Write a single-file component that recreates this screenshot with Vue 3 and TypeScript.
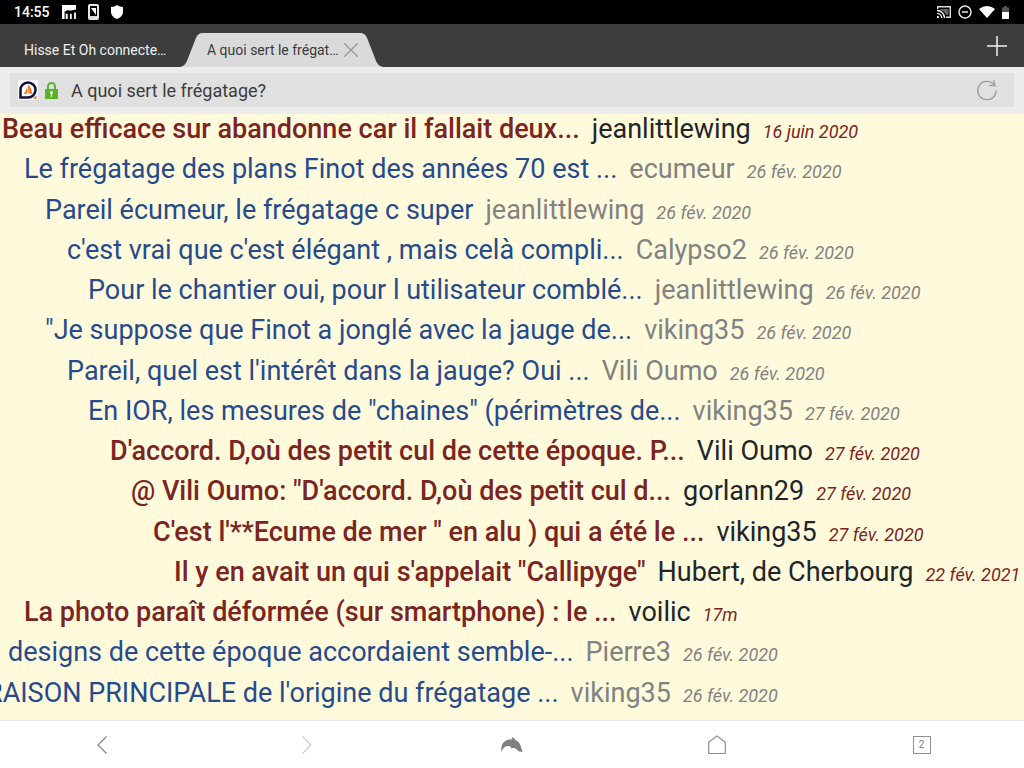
<script setup lang="ts">
import { ref } from 'vue'

interface Post {
  indent: number
  title: string
  author: string
  date: string
  unread?: boolean
}

const address = ref('A quoi sert le frégatage?')

const posts: Post[] = [
  { indent: 2, title: 'Beau efficace sur abandonne car il fallait deux...', author: 'jeanlittlewing', date: '16 juin 2020', unread: true },
  { indent: 24, title: 'Le frégatage des plans Finot des années 70 est ...', author: 'ecumeur', date: '26 fév. 2020' },
  { indent: 45, title: 'Pareil écumeur, le frégatage c super', author: 'jeanlittlewing', date: '26 fév. 2020' },
  { indent: 67, title: "c'est vrai que c'est élégant , mais celà compli...", author: 'Calypso2', date: '26 fév. 2020' },
  { indent: 88, title: 'Pour le chantier oui, pour l utilisateur comblé...', author: 'jeanlittlewing', date: '26 fév. 2020' },
  { indent: 45, title: '"Je suppose que Finot a jonglé avec la jauge de...', author: 'viking35', date: '26 fév. 2020' },
  { indent: 67, title: "Pareil, quel est l'intérêt dans la jauge? Oui ...", author: 'Vili Oumo', date: '26 fév. 2020' },
  { indent: 88, title: 'En IOR, les mesures de "chaines" (périmètres de...', author: 'viking35', date: '27 fév. 2020' },
  { indent: 110, title: "D'accord. D,où des petit cul de cette époque. P...", author: 'Vili Oumo', date: '27 fév. 2020', unread: true },
  { indent: 131, title: '@ Vili Oumo: "D\'accord. D,où des petit cul d...', author: 'gorlann29', date: '27 fév. 2020', unread: true },
  { indent: 153, title: "C'est l'**Ecume de mer \" en alu ) qui a été le ...", author: 'viking35', date: '27 fév. 2020', unread: true },
  { indent: 174, title: 'Il y en avait un qui s\'appelait "Callipyge"', author: 'Hubert, de Cherbourg', date: '22 fév. 2021', unread: true },
  { indent: 24, title: 'La photo paraît déformée (sur smartphone) : le ...', author: 'voilic', date: '17m', unread: true },
  { indent: 8, title: 'designs de cette époque accordaient semble-...', author: 'Pierre3', date: '26 fév. 2020' },
  { indent: -14, title: "RAISON PRINCIPALE de l'origine du frégatage ...", author: 'viking35', date: '26 fév. 2020' },
]
</script>

<template>
  <div class="browser">
    <header class="status">
      <time class="clock">14:55</time>
      <svg width="14" height="14" viewBox="0 0 14 14" aria-hidden="true">
        <path fill="#fff" d="M0 0h14v4.500L12 5.500H4V14H0z" />
        <path fill="none" stroke="#000" stroke-width="1.200" d="M3.200 14V6.200M3.200 7.500Q6.500 4.500 8.500 7.500 10.500 4.500 14 5.500" />
        <path fill="none" stroke="#fff" stroke-width="1.800" d="M4.800 14V8.800M8.800 14V8.800M13 14V7.500" />
      </svg>
      <svg class="after-app" width="11" height="16" viewBox="0 0 11 16" aria-hidden="true">
        <rect x="1" y="1" width="9" height="14" rx="1" fill="#000" stroke="#e6e6e6" stroke-width="2" />
        <path d="M3 4h5v7z" fill="#fff" />
        <path d="M2 13h7" stroke="#ddd" stroke-width="2" />
      </svg>
      <svg class="after-app" width="12" height="14" viewBox="0 0 12 14" aria-hidden="true">
        <path fill="#fff" d="M6 0Q8 2 12 2V7q0 4.500-6 7Q0 11.500 0 7V2Q4 2 6 0z" />
      </svg>
      <div class="system">
        <svg width="14" height="12" viewBox="0 0 14 12" fill="none" aria-hidden="true">
          <path d="M.7 3V.7h12.600v10.600H9" stroke="#ddd" stroke-width="1.400" />
          <path d="M3.500 3h8v6H9Q7.500 5 3.500 4z" fill="#666" />
          <path d="M0 4.500a7.500 7.500 0 0 1 7.500 7.500M0 7.300A4.700 4.700 0 0 1 4.700 12" stroke="#fff" stroke-width="1.300" />
          <path d="M0 9.800A2.200 2.200 0 0 1 2.200 12H0z" fill="#fff" />
        </svg>
        <svg width="14" height="14" viewBox="0 0 14 14" fill="none" stroke="#e6e6e6" stroke-width="1.500" aria-hidden="true">
          <circle cx="7" cy="7" r="6" /><path d="M4 7h6" />
        </svg>
        <svg width="16" height="12" viewBox="0 0 16 12" aria-hidden="true">
          <path fill="#fff" d="M0 3Q8-3 16 3L8 12z" />
        </svg>
        <svg width="7" height="13" viewBox="0 0 7 13" aria-hidden="true">
          <path fill="#555" d="M2 0h3v1.500H7V6H0V1.500h2z" /><path fill="#fff" d="M0 6h7v7H0z" />
        </svg>
      </div>
    </header>

    <nav class="tabs" aria-label="Onglets">
      <button class="tab" type="button">Hisse Et Oh connecte…</button>
      <div class="tab-active">
        <svg class="tab-shape" viewBox="0 0 204 34" preserveAspectRatio="none" aria-hidden="true">
          <path fill="#dadada" d="M0 34Q5 33 7 28L16 5Q18 0 23 0H181Q186 0 188 5L197 28Q199 33 204 34z" />
        </svg>
        <button class="tab-label" type="button">A quoi sert le frégat…</button>
        <button class="icon-button" type="button" aria-label="Fermer l'onglet">
          <svg width="14" height="14" viewBox="0 0 14 14" stroke="#999" stroke-width="1.300"><path d="M0 0 14 14M14 0 0 14" /></svg>
        </button>
      </div>
      <button class="icon-button new-tab" type="button" aria-label="Nouvel onglet">
        <svg width="20" height="20" viewBox="0 0 20 20" stroke="#f2f2f2" stroke-width="1.500"><path d="M10 0v20M0 10h20" /></svg>
      </button>
    </nav>

    <div class="toolbar">
      <div class="field">
        <svg width="20" height="20" viewBox="0 0 20 20" aria-hidden="true">
          <path fill="#fafafa" d="M0 0h20v20H0z" />
          <path d="M2.500 17.500V10A7.500 7.500 0 1 1 10 17.500z" fill="#fff" stroke="#111439" stroke-width="2.600" />
          <path fill="#ef7622" d="M10 4.500Q14 8 14 14L10.500 13.500zM9.500 6v7.500L5.500 14Q8 11 9.500 6zM15 18.500l3.500-3v3.500z" />
        </svg>
        <svg class="lock" width="13" height="17" viewBox="0 0 13 17" aria-hidden="true">
          <path d="M3 8V4.500a3.500 3.500 0 0 1 7 0V8" fill="none" stroke="#58b32b" stroke-width="2" />
          <rect y="7" width="13" height="10" rx="1" fill="#58b32b" />
          <circle cx="6.500" cy="10.500" r="1.500" fill="#e8f5df" /><path d="M6.500 11v4" stroke="#e8f5df" stroke-width="1.300" />
        </svg>
        <input v-model="address" class="address" type="text" aria-label="Adresse" />
        <button class="icon-button" type="button" aria-label="Actualiser">
          <svg width="20" height="20" viewBox="0 0 20 20" fill="none" stroke="#999" stroke-width="1.300">
            <path d="M19.200 10.500a9.200 9.200 0 1 1-3-6.800l1.300 1.600" /><path d="M16.700 0l1.300 5.800-5.800-.5" />
          </svg>
        </button>
      </div>
    </div>

    <main class="page">
      <ul class="thread">
        <li v-for="(post, i) in posts" :key="i" class="post" :class="{ unread: post.unread }" :style="{ marginLeft: post.indent + 'px' }">
          <a class="title" href="#">{{ post.title }}</a>
          <span class="author">{{ post.author }}</span>
          <em class="date">{{ post.date }}</em>
        </li>
      </ul>
    </main>

    <nav class="bottom" aria-label="Navigation">
      <button class="icon-button" type="button" aria-label="Précédent">
        <svg width="10" height="18" viewBox="0 0 10 18" fill="none" stroke="#858585" stroke-width="1.200"><path d="M9.500 0.500 1 9l8.500 8.500" /></svg>
      </button>
      <button class="icon-button" type="button" aria-label="Suivant">
        <svg width="10" height="18" viewBox="0 0 10 18" fill="none" stroke="#ccc" stroke-width="1.200"><path d="M0.500 0.500 9 9 .5 17.500" /></svg>
      </button>
      <button class="icon-button" type="button" aria-label="Menu">
        <svg width="22" height="16" viewBox="0 0 22 16" fill="#808080">
          <path d="M.7 15Q-.8 8 3.500 4.500 7 2 11 2.200L11.500 0Q13.500.8 14 2.800 19 5 20 10L21.500 15 17.500 14.200Q15.500 11.500 12.500 10.700L10.500 11.500 9.500 9.500Q3 7.500.7 15z" />
        </svg>
      </button>
      <button class="icon-button" type="button" aria-label="Accueil">
        <svg width="18" height="20" viewBox="0 0 18 20" fill="none" stroke="#909090" stroke-width="1.200"><path d="M.7 18.500V7.200L9 1l8.300 6.200V18.500z" stroke-linejoin="round" /></svg>
      </button>
      <button class="icon-button" type="button" aria-label="2 onglets ouverts"><span class="count">2</span></button>
    </nav>
  </div>
</template>

<style>
body {
  margin: 0;
}
</style>

<style scoped>
.browser {
  display: flex;
  flex-direction: column;
  height: 100vh;
  overflow: hidden;
  font-family: Roboto, 'Liberation Sans', sans-serif;
}
button {
  padding: 0;
  border: 0;
  background: none;
  font: inherit;
  color: inherit;
}
.icon-button {
  display: flex;
  align-items: center;
  justify-content: center;
}
svg {
  display: block;
  flex: none;
}
.status {
  display: flex;
  flex: none;
  align-items: center;
  height: 24px;
  padding: 0 15px 0 14px;
  background: #000;
  color: #fff;
}
.clock {
  margin-right: 12px;
  font-size: 14px;
  font-weight: 500;
}
.after-app {
  margin-left: 12px;
}
.system {
  display: flex;
  align-items: center;
  gap: 7px;
  margin-left: auto;
}
.tabs {
  display: flex;
  flex: none;
  align-items: flex-end;
  height: 43px;
  padding: 0 17px 0 24px;
  background: #3d3d3d;
}
.tab {
  width: 156px;
  height: 34px;
  color: #f0f0f0;
  font-size: 14px;
  text-align: left;
  white-space: nowrap;
}
.tab-active {
  position: relative;
  display: flex;
  align-items: center;
  gap: 5px;
  width: 176px;
  height: 34px;
  padding-left: 27px;
  color: #3a3a3a;
  font-size: 14px;
}
.tab-shape {
  position: absolute;
  inset: 0;
  width: 100%;
  height: 100%;
}
.tab-label {
  position: relative;
  white-space: nowrap;
}
.tab-active .icon-button {
  position: relative;
}
.new-tab {
  align-self: center;
  margin-left: auto;
}
.toolbar {
  flex: none;
  padding: 6px 10px 7px;
  background: #ececec;
}
.field {
  display: flex;
  align-items: center;
  height: 34px;
  padding: 0 17px 0 8px;
  border-radius: 2px;
  background: #e0e0e0;
}
.lock {
  margin: 0 13px 0 7px;
}
.address {
  flex: 1;
  min-width: 0;
  padding: 0;
  border: 0;
  outline: 0;
  background: none;
  color: #3c3c3c;
  font-family: inherit;
  font-size: 18px;
}
.page {
  display: flex;
  flex: 1;
  flex-direction: column;
  min-height: 0;
  padding-bottom: 5px;
  overflow: hidden;
  background: #fffadc;
}
.thread {
  display: flex;
  flex: 1;
  flex-direction: column;
  margin: -3px 0 0;
  padding: 0;
  list-style: none;
}
.post {
  display: flex;
  flex: 1;
  align-items: baseline;
  gap: 12px;
  color: #828282;
  font-size: 27px;
  line-height: 36px;
  white-space: nowrap;
}
.title {
  color: #264b8c;
  text-decoration: none;
}
.date {
  font-size: 18px;
}
.unread .title {
  color: #7a2522;
  font-weight: 500;
}
.unread .author {
  color: #212529;
}
.unread .date {
  color: #7a2522;
}
.bottom {
  display: grid;
  flex: none;
  grid-template-columns: repeat(5, 1fr);
  height: 47px;
  border-top: 1px solid #e8e8e8;
  background: #fff;
}
.count {
  width: 16px;
  border: 1px solid #909090;
  color: #808080;
  font-size: 10px;
  line-height: 16px;
}
</style>
